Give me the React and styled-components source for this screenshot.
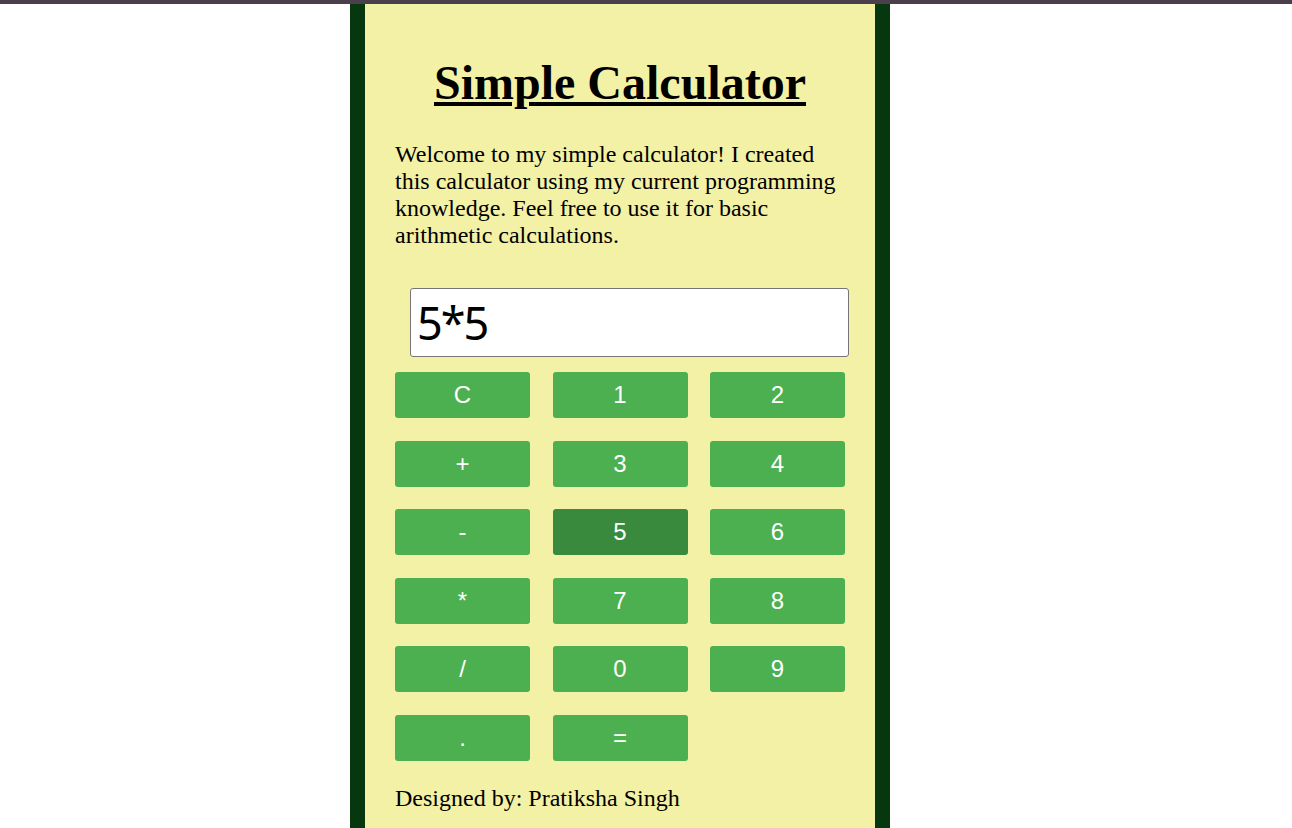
import React from "react";
import styled, { createGlobalStyle } from "styled-components";

const GlobalStyle = createGlobalStyle`
  html, body {
    margin: 0;
    padding: 0;
    background: #ffffff;
    font-family: "Liberation Serif", "Times New Roman", serif;
  }
`;

const TopBar = styled.div`
  height: 4px;
  background: #4a3f4a;
`;

const Page = styled.div`
  display: flex;
  min-height: 824px;
`;

const Container = styled.main`
  margin-left: 350px;
  width: 450px;
  border-left: 15px solid #06370f;
  border-right: 15px solid #06370f;
  background: #f3f1a6;
  padding: 19px 30px 20px;
  box-sizing: content-box;
  color: #000;
`;

const Title = styled.h1`
  margin: 32px 0 31px;
  font-size: 48px;
  font-weight: bold;
  text-align: center;
  text-decoration: underline;
  line-height: normal;
`;

const Intro = styled.p`
  margin: 0;
  font-size: 24px;
  line-height: 27px;
`;

const Display = styled.input`
  display: block;
  margin: 39px 0 15px 15px;
  width: 439px;
  height: 69px;
  box-sizing: border-box;
  border: 1px solid #767676;
  border-radius: 3px;
  background: #fff;
  padding: 0 6px;
  font-family: "Noto Sans", "Open Sans", sans-serif;
  font-size: 45px;
  letter-spacing: -2px;
  color: #000;
  outline: none;
`;

const Keypad = styled.div`
  display: grid;
  grid-template-columns: repeat(3, 135px);
  grid-auto-rows: 46px;
  justify-content: space-between;
  row-gap: 22.5px;
`;

const Key = styled.button`
  border: none;
  border-radius: 3px;
  background: ${(p) => (p.$pressed ? "#3a8a3e" : "#4caf50")};
  color: #ffffff;
  font-family: "Liberation Sans", Arial, sans-serif;
  font-size: 24px;
  padding: 0;
  cursor: pointer;
`;

const Footer = styled.p`
  margin: 24px 0 0;
  font-size: 24px;
  line-height: 27px;
`;

const keys = ["C", "1", "2", "+", "3", "4", "-", "5", "6", "*", "7", "8", "/", "0", "9", ".", "="];

export default function App() {
  return (
    <>
      <GlobalStyle />
      <TopBar />
      <Page>
        <Container>
          <Title>Simple Calculator</Title>
          <Intro>
            Welcome to my simple calculator! I created this calculator using my current
            programming knowledge. Feel free to use it for basic arithmetic calculations.
          </Intro>
          <Display type="text" defaultValue="5*5" />
          <Keypad>
            {keys.map((k) => (
              <Key key={k} $pressed={k === "5"}>
                {k}
              </Key>
            ))}
          </Keypad>
          <Footer>Designed by: Pratiksha Singh</Footer>
        </Container>
      </Page>
    </>
  );
}
